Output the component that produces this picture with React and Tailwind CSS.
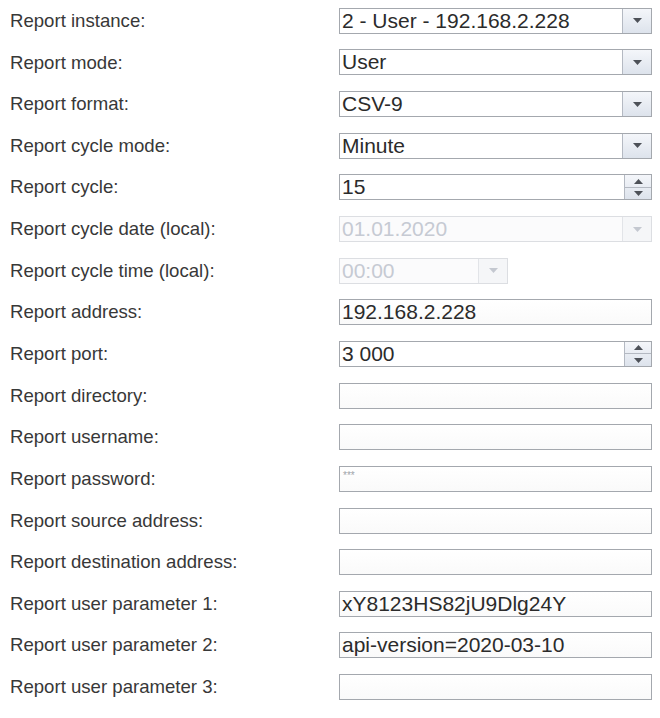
const rows = [
  { label: "Report instance:", kind: "select", value: "2 - User - 192.168.2.228" },
  { label: "Report mode:", kind: "select", value: "User" },
  { label: "Report format:", kind: "select", value: "CSV-9" },
  { label: "Report cycle mode:", kind: "select", value: "Minute" },
  { label: "Report cycle:", kind: "spin", value: "15" },
  { label: "Report cycle date (local):", kind: "select", value: "01.01.2020", disabled: true },
  { label: "Report cycle time (local):", kind: "select", value: "00:00", disabled: true, short: true },
  { label: "Report address:", kind: "text", value: "192.168.2.228" },
  { label: "Report port:", kind: "spin", value: "3 000" },
  { label: "Report directory:", kind: "text", value: "" },
  { label: "Report username:", kind: "text", value: "" },
  { label: "Report password:", kind: "password", value: "***" },
  { label: "Report source address:", kind: "text", value: "" },
  { label: "Report destination address:", kind: "text", value: "" },
  { label: "Report user parameter 1:", kind: "text", value: "xY8123HS82jU9Dlg24Y" },
  { label: "Report user parameter 2:", kind: "text", value: "api-version=2020-03-10" },
  { label: "Report user parameter 3:", kind: "text", value: "" },
];

function Arrow({ up, faded }) {
  return (
    <svg width="9" height="5" viewBox="0 0 9 5" className={up ? "rotate-180" : ""}>
      <path d="M0 0h9L4.5 5z" fill={faded ? "#c4c8d0" : "#4d5158"} />
    </svg>
  );
}

function Select({ value, disabled, short }) {
  return (
    <div
      className={`flex h-[26px] border ${short ? "w-[169px]" : "w-[313px]"} ${
        disabled ? "border-[#dcdee2] bg-[#fbfbfc] text-[#c6cad3]" : "border-[#a4a8ae] bg-white text-[#2b2b2b]"
      }`}
    >
      <div className="flex-1 pl-[2px] leading-[24px] overflow-hidden whitespace-nowrap">{value}</div>
      <div
        className={`w-[29px] flex items-center justify-center border-l ${
          disabled ? "border-[#e2e4e8] bg-[#f5f6f8]" : "border-[#b4b9c2] bg-gradient-to-b from-[#f4f6fa] to-[#dde3ec]"
        }`}
      >
        <Arrow faded={disabled} />
      </div>
    </div>
  );
}

function Spin({ value }) {
  return (
    <div className="flex h-[26px] w-[313px] border border-[#a4a8ae] bg-white text-[#2b2b2b]">
      <div className="flex-1 pl-[2px] leading-[24px]">{value}</div>
      <div className="w-[27px] flex flex-col border-l border-[#b4b9c2] bg-gradient-to-b from-[#f4f6fa] to-[#dde3ec]">
        <div className="flex-1 flex items-center justify-center border-b border-[#b4b9c2]">
          <Arrow up />
        </div>
        <div className="flex-1 flex items-center justify-center">
          <Arrow />
        </div>
      </div>
    </div>
  );
}

function TextBox({ value, password }) {
  return (
    <div className="h-[26px] w-[313px] border border-[#a4a8ae] bg-gradient-to-b from-white to-[#fafafa] text-[#2b2b2b]">
      {password ? (
        <div className="pl-[3px] pt-[4px] text-[10px] leading-none text-[#a0a4aa]">{value}</div>
      ) : (
        <div className="pl-[2px] leading-[24px] whitespace-nowrap overflow-hidden">{value}</div>
      )}
    </div>
  );
}

export default function App() {
  return (
    <div className="min-h-screen bg-white pl-[10px] font-['Liberation_Sans',Arial,sans-serif] text-[21px]">
      {rows.map((row) => (
        <div key={row.label} className="flex items-center h-[41.65px]">
          <div className="w-[329px] text-[18.6px] text-[#383838]">{row.label}</div>
          {row.kind === "select" && <Select value={row.value} disabled={row.disabled} short={row.short} />}
          {row.kind === "spin" && <Spin value={row.value} />}
          {row.kind === "text" && <TextBox value={row.value} />}
          {row.kind === "password" && <TextBox value={row.value} password />}
        </div>
      ))}
    </div>
  );
}
